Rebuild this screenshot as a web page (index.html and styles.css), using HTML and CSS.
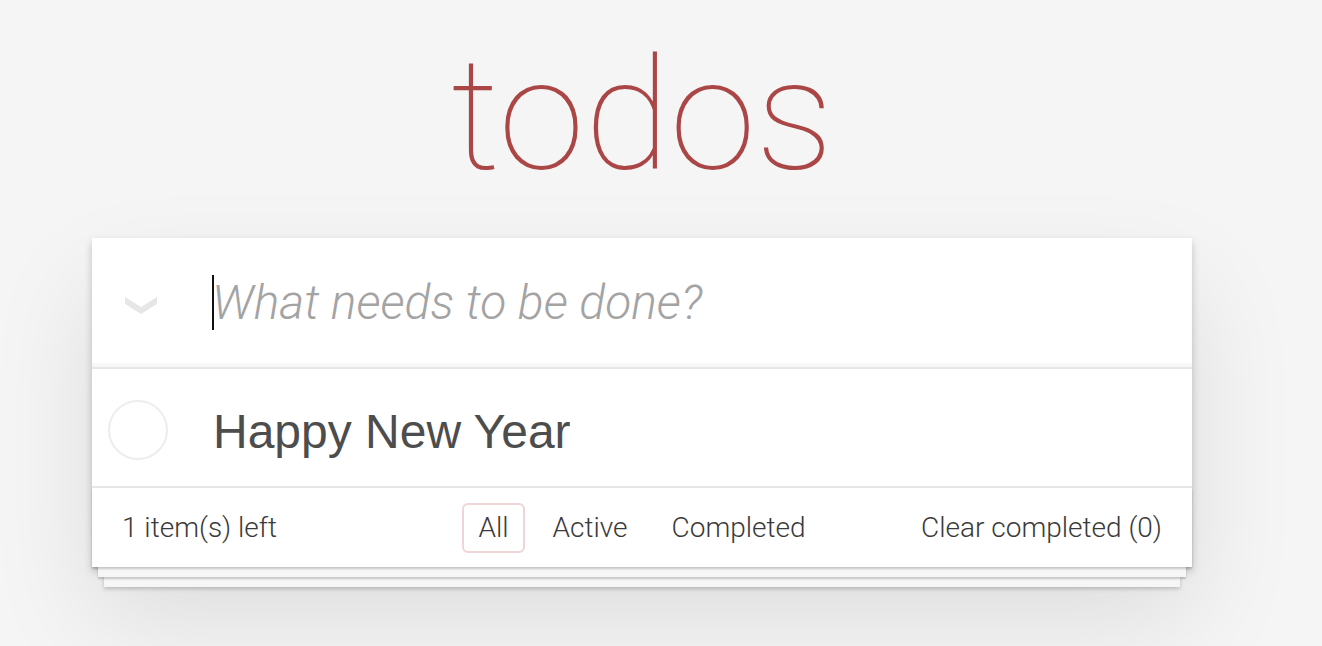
FILE: index.html
```html
<!DOCTYPE html>
<html lang="en">
<head>
<meta charset="utf-8">
<title>todos</title>
<link rel="stylesheet" href="styles.css">
</head>
<body>
<div class="app">
  <h1 class="title">todos</h1>
  <section class="card">
    <header class="new-row">
      <span class="toggle-all">
        <svg width="32" height="18" viewBox="0 0 32 18"><polygon points="0,1 16,11 32,1 32,8 16,18 0,8" fill="#e6e6e6"/></svg>
      </span>
      <div class="new-input"><span class="caret"></span><span class="placeholder">What needs to be done?</span></div>
    </header>
    <ul class="list">
      <li class="item"><span class="check"></span><span class="label">Happy New Year</span></li>
    </ul>
    <footer class="footer">
      <span class="count">1 item(s) left</span>
      <ul class="filters">
        <li><a class="filter selected">All</a></li>
        <li><a class="filter">Active</a></li>
        <li><a class="filter">Completed</a></li>
      </ul>
      <button class="clear">Clear completed (0)</button>
    </footer>
  </section>
</div>
</body>
</html>
```
FILE: styles.css
```css
html, body {
  margin: 0;
  padding: 0;
}
html {
  background: #f5f5f5;
}
body {
  min-height: 100vh;
  font-family: Roboto, "Liberation Sans", sans-serif;
  font-weight: 300;
  color: #4d4d4d;
  -webkit-font-smoothing: antialiased;
}
.app {
  width: 1100px;
  margin-left: 92px;
  padding-bottom: 40px;
}
.title {
  margin: 0;
  height: 238px;
  box-sizing: border-box;
  padding-top: 37px;
  text-align: center;
  font-family: Roboto, "Liberation Sans", sans-serif;
  font-weight: 100;
  font-size: 156px;
  line-height: 1;
  color: #ab4646;
}
.card {
  position: relative;
  z-index: 0;
  background: #fff;
  box-shadow: 0 4px 8px 0 rgba(0,0,0,0.2), 0 50px 100px 0 rgba(0,0,0,0.1);
}
.new-row {
  display: flex;
  align-items: center;
  height: 129px;
  border-bottom: 2px solid #e6e6e6;
  box-shadow: inset 0 -4px 2px rgba(0,0,0,0.03);
}
.toggle-all {
  width: 120px;
  box-sizing: border-box;
  padding-left: 33px;
  display: flex;
  margin-top: 4px;
}
.new-input {
  display: flex;
  align-items: center;
}
.caret {
  width: 2px;
  height: 55px;
  background: #111;
  margin-right: -2px;
}
.placeholder {
  font-style: italic;
  font-weight: 300;
  font-size: 48px;
  color: #a3a3a3;
}
.list {
  list-style: none;
  margin: 0;
  padding: 0;
}
.item {
  display: flex;
  align-items: center;
  height: 117px;
}
.check {
  width: 60px;
  height: 60px;
  box-sizing: border-box;
  border: 2px solid #ededed;
  border-radius: 50%;
  margin-left: 16px;
  margin-top: 4px;
}
.label {
  margin-left: 45px;
  padding-top: 7px;
  font-family: "Liberation Sans", Arial, sans-serif;
  font-weight: 400;
  font-size: 48px;
  color: #4d4d4d;
}
.footer {
  position: relative;
  display: grid;
  grid-template-columns: 1fr auto 1fr;
  align-items: center;
  height: 79px;
  padding: 0 30px;
  border-top: 2px solid #e6e6e6;
  font-size: 28px;
  color: #3a3a3a;
}
.footer::before {
  content: "";
  position: absolute;
  left: 0;
  right: 0;
  bottom: 0;
  height: 79px;
  z-index: -1;
  box-shadow: 0 2px 2px rgba(0,0,0,0.2),
              0 16px 0 -6px #f6f6f6,
              0 18px 2px -6px rgba(0,0,0,0.2),
              0 32px 0 -12px #f6f6f6,
              0 34px 4px -12px rgba(0,0,0,0.2);
}
.count {
  justify-self: start;
}
.filters {
  list-style: none;
  margin: 0;
  padding: 0;
  display: flex;
}
.filter {
  display: block;
  margin: 0 6px;
  padding: 6px 14px;
  line-height: 34px;
  border: 2px solid transparent;
  border-radius: 6px;
  color: #3a3a3a;
}
.filter.selected {
  border-color: rgba(175,47,47,0.2);
}
.clear {
  justify-self: end;
  background: none;
  border: 0;
  padding: 0;
  margin: 0;
  font: inherit;
  color: #3a3a3a;
}
```
